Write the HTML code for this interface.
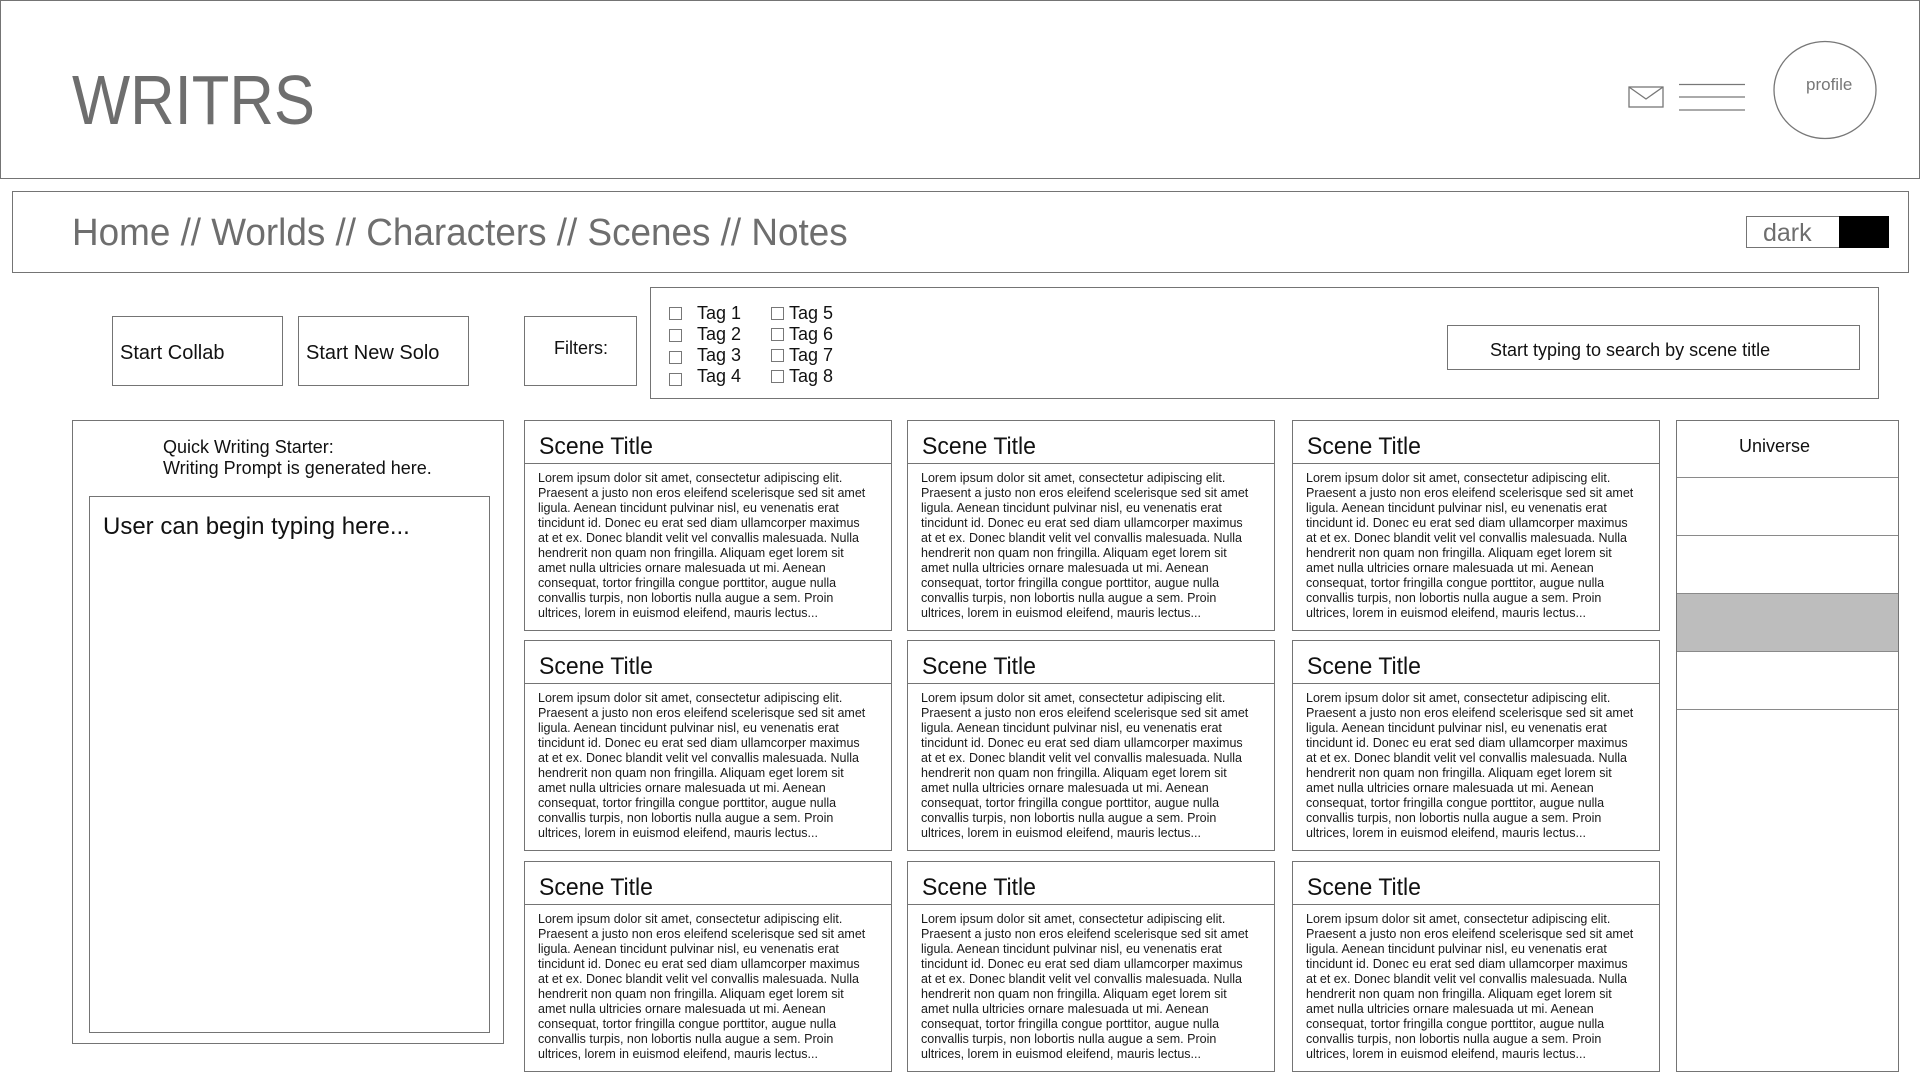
<!DOCTYPE html>
<html><head><meta charset="utf-8"><style>
*{box-sizing:border-box;margin:0;padding:0}
body{width:1920px;height:1080px;background:#fff;position:relative;overflow:hidden;font-family:"Liberation Sans",sans-serif;color:#111}
.b{position:absolute;border:1.5px solid #747474}
.t{position:absolute;white-space:nowrap}
.card .h{position:absolute;left:0;right:0;top:0;height:43px;border-bottom:1.5px solid #747474}
.card .h span{position:absolute;left:14px;top:12px;font-size:24px;color:#111;transform:scaleX(0.96);transform-origin:left}
.card .p{position:absolute;left:13px;top:50px;font-size:12.5px;line-height:15px;color:#1a1a1a;white-space:nowrap}
.cb{position:absolute;width:13px;height:13px;border:1px solid #777}
.tag{position:absolute;font-size:18px;color:#111}
.row{position:absolute;left:0;right:0;border-bottom:1.5px solid #8a8a8a}
</style></head><body>
<div class="b" style="left:0;top:0;width:1920px;height:179px"></div>
<div class="t" style="left:72px;top:60px;font-size:70px;color:#6e6e6e;transform:scaleX(0.88);transform-origin:left">WRITRS</div>
<svg style="position:absolute;left:1628px;top:86px" width="38" height="24"><rect x="1" y="1" width="34" height="20" fill="none" stroke="#777" stroke-width="1.3"/><path d="M1 1 L18 13 L35 1" fill="none" stroke="#777" stroke-width="1.3"/></svg>
<svg style="position:absolute;left:1678px;top:80px" width="70" height="36"><path d="M1 4.5H67M1 17H67M1 30H67" stroke="#777" stroke-width="1.3"/></svg>
<svg style="position:absolute;left:1772px;top:39px" width="106" height="102"><ellipse cx="53" cy="51" rx="51" ry="48.5" fill="none" stroke="#777" stroke-width="1.3"/></svg>
<div class="t" style="left:1806px;top:75px;font-size:17px;color:#777">profile</div>

<div class="b" style="left:12px;top:191px;width:1897px;height:82px"></div>
<div class="t" style="left:72px;top:212px;font-size:38px;color:#6e6e6e;transform:scaleX(0.97);transform-origin:left">Home // Worlds // Characters // Scenes // Notes</div>
<div class="b" style="left:1746px;top:216px;width:143px;height:32px"></div>
<div style="position:absolute;left:1839px;top:216px;width:50px;height:32px;background:#000"></div>
<div class="t" style="left:1763px;top:219px;font-size:25px;color:#6e6e6e">dark</div>

<div class="b" style="left:112px;top:316px;width:171px;height:70px"></div>
<div class="t" style="left:120px;top:342px;font-size:20px">Start Collab</div>
<div class="b" style="left:298px;top:316px;width:171px;height:70px"></div>
<div class="t" style="left:306px;top:342px;font-size:20px">Start New Solo</div>
<div class="b" style="left:524px;top:316px;width:113px;height:70px"></div>
<div class="t" style="left:554px;top:338px;font-size:18px">Filters:</div>

<div class="b" style="left:650px;top:287px;width:1229px;height:112px"></div>
<div class="cb" style="left:669px;top:307px"></div><div class="tag" style="left:697px;top:303px">Tag 1</div>
<div class="cb" style="left:669px;top:329px"></div><div class="tag" style="left:697px;top:324px">Tag 2</div>
<div class="cb" style="left:669px;top:351px"></div><div class="tag" style="left:697px;top:345px">Tag 3</div>
<div class="cb" style="left:669px;top:373px"></div><div class="tag" style="left:697px;top:366px">Tag 4</div>
<div class="cb" style="left:771px;top:307px"></div><div class="tag" style="left:789px;top:303px">Tag 5</div>
<div class="cb" style="left:771px;top:328px"></div><div class="tag" style="left:789px;top:324px">Tag 6</div>
<div class="cb" style="left:771px;top:349px"></div><div class="tag" style="left:789px;top:345px">Tag 7</div>
<div class="cb" style="left:771px;top:370px"></div><div class="tag" style="left:789px;top:366px">Tag 8</div>
<div class="b" style="left:1447px;top:325px;width:413px;height:45px"></div>
<div class="t" style="left:1490px;top:340px;font-size:18px">Start typing to search by scene title</div>

<div class="b" style="left:72px;top:420px;width:432px;height:624px"></div>
<div class="t" style="left:163px;top:437px;font-size:18px;line-height:21px">Quick Writing Starter:<br>Writing Prompt is generated here.</div>
<div class="b" style="left:89px;top:496px;width:401px;height:537px"></div>
<div class="t" style="left:103px;top:513px;font-size:24px">User can begin typing here...</div>

<div id="cards"></div>

<div class="b" style="left:1676px;top:420px;width:223px;height:652px">
<div class="t" style="left:0;right:26px;top:15px;text-align:center;font-size:18px">Universe</div>
<div class="row" style="top:0;height:57px"></div>
<div class="row" style="top:57px;height:58px"></div>
<div class="row" style="top:115px;height:58px"></div>
<div class="row" style="top:173px;height:58px;background:#bdbdbd"></div>
<div class="row" style="top:231px;height:58px"></div>
</div>
<script>
var txt='Lorem ipsum dolor sit amet, consectetur adipiscing elit.<br>Praesent a justo non eros eleifend scelerisque sed sit amet<br>ligula. Aenean tincidunt pulvinar nisl, eu venenatis erat<br>tincidunt id. Donec eu erat sed diam ullamcorper maximus<br>at et ex. Donec blandit velit vel convallis malesuada. Nulla<br>hendrerit non quam non fringilla. Aliquam eget lorem sit<br>amet nulla ultricies ornare malesuada ut mi. Aenean<br>consequat, tortor fringilla congue porttitor, augue nulla<br>convallis turpis, non lobortis nulla augue a sem. Proin<br>ultrices, lorem in euismod eleifend, mauris lectus...';
var xs=[524,907,1292],ys=[420,640,861],h='';
ys.forEach(function(y){xs.forEach(function(x){h+='<div class="b card" style="left:'+x+'px;top:'+y+'px;width:368px;height:211px"><div class="h"><span>Scene Title</span></div><div class="p">'+txt+'</div></div>';});});
document.getElementById('cards').innerHTML=h;
</script>
</body></html>
